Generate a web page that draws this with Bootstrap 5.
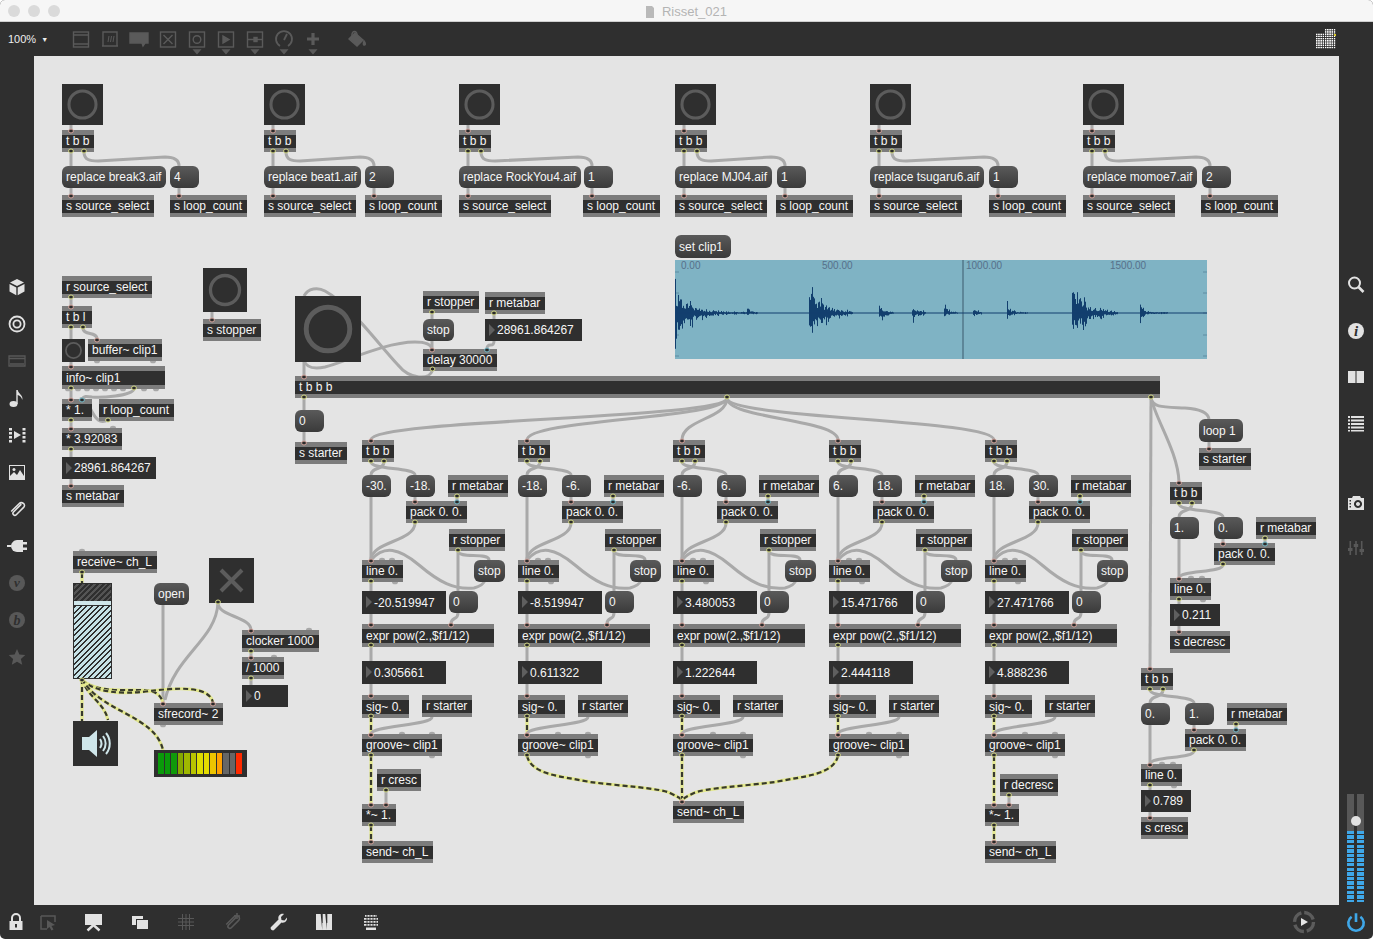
<!doctype html>
<html lang="en">
<head>
<meta charset="utf-8">
<title>Risset_021</title>
<link href="https://cdn.jsdelivr.net/npm/bootstrap@5.3.0/dist/css/bootstrap.min.css" rel="stylesheet">
<style>
html,body{height:100%;margin:0;background:#fff;overflow:hidden}
.mx-win{height:939px;background:#2f2f2f;border-radius:5px;overflow:hidden;font-family:"Liberation Sans",Arial,sans-serif}
.mx-title{height:22px;background:#f6f6f6;border-bottom:1px solid #cfcfcf;position:relative;color:#b4b4b4;font-size:13px;padding-top:2px}
.mx-titleic{margin-right:7px;margin-left:-1px}
.mx-lights{left:8px;top:5px;gap:8px}
.mx-light{width:12px;height:12px;border-radius:50%;background:#dadada}
.mx-tool{height:34px;color:#5a5a5a}
.mx-zoomsel{width:69px;padding-left:8px;color:#eee;font-size:11px}
.mx-zoomsel span{font-size:7px;margin-left:5px;vertical-align:1px}
.mx-tool svg.t{width:24px;height:34px;margin-right:5px;flex:none}
.mx-gridic{margin-right:37px}
.mx-bucket{margin-left:13px}
.mx-side{width:34px;flex:none;color:#e2e2e2}
.mx-sl{padding-top:221px;gap:17px}
.mx-sr{padding-top:206px}
.mx-srow{height:46px}
.mx-srow-gap{margin-top:33px}
.mx-side svg,.mx-bot svg{width:20px;height:20px;flex:none;overflow:visible}
.mx-dim{color:#585858}
.mx-canvas{background:#e4e4e4;height:849px}
.mx-layer{position:absolute;left:0;top:0;width:1305px;height:849px;pointer-events:none}
.mx-cords{z-index:1}.mx-dots{z-index:3}
.mx-node{position:absolute;z-index:2;display:flex;align-items:center;height:22px;padding:0 4px;color:#f6f6f6;font-size:12px;line-height:1;white-space:nowrap;overflow:hidden}
.mx-obj{background:linear-gradient(#7c7c7c 0 5px,#2f2f2f 5px calc(100% - 4px),#7c7c7c calc(100% - 4px))}
.mx-msg{background:linear-gradient(#5a5a5a,#3a3a3a);border-radius:6px}
.mx-num{background:#2f2f2f;padding-left:12px}
.mx-num::before{content:"";position:absolute;left:4px;top:5px;border-left:6px solid #5f5f5f;border-top:6px solid transparent;border-bottom:6px solid transparent}
.mx-sq{background:#2f2f2f;padding:0}
.mx-sq svg{display:block;width:100%;height:100%}
.mx-gain{background:repeating-linear-gradient(135deg,#2f2f2f 0 1.4px,#c6e2e7 1.4px 4px);border:1px solid #2f2f2f;padding:0;display:block}
.mx-gaintop{height:17px;background:repeating-linear-gradient(135deg,#2f2f2f 0 2px,#545454 2px 4px)}
.mx-gainbar{height:5px;background:#cfe6ea;border-bottom:1px solid #2f2f2f}
.mx-meter{background:#2f2f2f;padding:3px 4px 3px 4px;gap:0;align-items:stretch}
.mx-seg{flex:1;margin-right:1px;min-width:0}
.mx-wave{background:#7fb3c4;padding:0}
.mx-wave svg{display:block}
.mx-wave text{font:10px "Liberation Sans",Arial,sans-serif;fill:#56708a}
.mx-fader{gap:3px;margin-top:auto;margin-bottom:3px;height:108px;position:relative;width:18px}
.mx-fadertrack{width:7px;height:100%;background:linear-gradient(#585858 0 37px,transparent 37px),repeating-linear-gradient(#3fa7e8 0 3.4px,#2f2f2f 3.4px 4.6px)}
.mx-knob{position:absolute;left:4px;top:22px;width:10px;height:10px;border-radius:50%;background:#e2e2e2}
.mx-bot{height:34px;color:#e2e2e2;position:relative}
.mx-bot svg{position:absolute;top:7px}
.mx-bot svg.mx-play{width:24px;height:24px;top:5px}
.mx-bot svg.mx-power{color:#3fa7e8;width:22px;height:22px;top:6px}
</style>
</head>
<body>
<div class="mx-win d-flex flex-column">
  <div class="mx-title d-flex align-items-center justify-content-center flex-none">
    <div class="mx-lights position-absolute d-flex"><i class="mx-light"></i><i class="mx-light"></i><i class="mx-light"></i></div>
    <svg width="10" height="12" viewBox="0 0 10 12" class="mx-titleic"><path d="M1 0h6l2 2v10H1z" fill="#b9b9b9"/></svg>
    <span>Risset_021</span>
  </div>
  <div class="mx-tool d-flex align-items-center" id="mxTool">
    <div class="mx-zoomsel">100%<span>&#9660;</span></div>
  </div>
  <div class="d-flex flex-grow-1">
    <aside class="mx-side mx-sl d-flex flex-column align-items-center" id="mxLeft"></aside>
    <main class="mx-canvas position-relative flex-grow-1" id="mxCanvas"></main>
    <aside class="mx-side mx-sr d-flex flex-column align-items-center" id="mxRight"></aside>
  </div>
  <footer class="mx-bot" id="mxBot"></footer>
</div>
<script src="https://cdn.jsdelivr.net/npm/bootstrap@5.3.0/dist/js/bootstrap.bundle.min.js"></script>
<script>
(function(){
const cv=document.getElementById('mxCanvas');
let cords='',dots='';
function node(x,y,w,txt,cls,h,inner){
  const d=document.createElement('div');
  d.className='mx-node '+cls;
  d.style.left=(x-34)+'px';d.style.top=(y-56)+'px';d.style.width=w+'px';
  if(h)d.style.height=h+'px';
  if(inner!==undefined)d.innerHTML=inner;else d.textContent=txt;
  cv.appendChild(d);
}
const O=(x,y,w,t,h)=>node(x,y,w,t,'mx-obj',h);
const M=(x,y,w,t,h)=>node(x,y,w,t,'mx-msg',h);
const N=(x,y,w,t,h)=>node(x,y,w,t,'mx-num',h);
function B(x,y,s){node(x,y,s,'','mx-sq',s,`<svg viewBox="0 0 100 100"><circle cx="50" cy="50" r="33" fill="none" stroke="#5c5c5c" stroke-width="7.5"/></svg>`);}
function dot(x,y,k){const st={o:'#d6db86',i:'#d6a59d',c:'#74bccb'}[k];
  dots+=`<ellipse cx="${x}" cy="${y}" rx="2.4" ry="2" fill="#2b2b2b" stroke="${st}" stroke-width="1"/>`;}
function lump(x,y,up){dots+=`<path d="M${x-3} ${y}A3 2.300 0 0 ${up?0:1} ${x+3} ${y}Z" fill="#a8a8a8"/>`;}
function P(d,f=''){
  if(f.includes('s')) cords+=`<path d="${d}" fill="none" stroke="#e3e88e" stroke-width="3.2"/><path d="${d}" fill="none" stroke="#37392c" stroke-width="2.2" stroke-dasharray="5 3"/>`;
  else cords+=`<path d="${d}" fill="none" stroke="#a9a9a9" stroke-width="3"/>`;
}
function C(x1,y1,x2,y2,f=''){
  let d;
  if(x1===x2)d=`M${x1} ${y1}L${x2} ${y2}`;
  else{const k=Math.max(8,Math.abs(y2-y1)*.5);d=`M${x1} ${y1}C${x1} ${y1+k} ${x2} ${y2-k} ${x2} ${y2}`;}
  P(d,f);
  if(!f.includes('n'))dot(x1,y1-1,'o');
  if(!f.includes('e'))dot(x2,y2+1,f.includes('c')?'c':'i');
}
function arc(x1,y1,x2,y2){P(`M${x1} ${y1}C${x1} ${y1+8} ${x1+6} ${y1+9} ${x1+14} ${y1+9}L${x2-14} ${y1+5}C${x2-4} ${y1+5} ${x2} ${y1+8} ${x2} ${y2}`);dot(x1,y1-1,'o');}

/* ---------- top row of players ---------- */
[[62,'replace break3.aif',104,170,'4',170],
 [264,'replace beat1.aif',97,365,'2',365],
 [459,'replace RockYou4.aif',122,584,'1',583],
 [675,'replace MJ04.aif',97,777,'1',776],
 [870,'replace tsugaru6.aif',114,989,'1',989],
 [1083,'replace momoe7.aif',114,1202,'2',1201]].forEach(([x,t,w,mx,v,sx])=>{
  B(x,84,41);O(x,130,32,'t b b');M(x,166,w,t);M(mx,166,29,v);
  O(x,195,92,'s source_select');O(sx,195,77,'s loop_count');
  C(x+9,125,x+9,130,'n');C(x+9,152,x+9,166,'e');arc(x+22,152,sx+9,166);
  C(x+9,188,x+9,195,'n');C(sx+9,188,sx+9,195,'n');
});

/* ---------- left column ---------- */
O(62,276,90,'r source_select');O(62,306,30,'t b l');B(62,339,23);O(88,339,74,'buffer~ clip1');
O(62,366,103,'info~ clip1',23);O(62,399,30,'* 1.');O(99,399,75,'r loop_count');O(62,428,60,'* 3.92083');
N(62,457,94,'28961.864267');O(62,485,62,'s metabar');
B(203,268,44);O(203,319,58,'s stopper');
C(71,298,71,306);C(71,328,71,339,'e');C(71,362,71,366,'n');C(83,328,97,339);
C(71,389,71,399);
P('M134 389C132 396 100 398 92 397C86 396 84 396 82 399');dot(134,388,'o');dot(82,400,'c');
P('M108 420C100 424 96 420 90 408C88 402 84 398 80 399');dot(108,420,'o');
C(71,421,71,428);C(71,450,71,457,'e');C(71,479,71,485,'n');
C(212,312,212,319,'n');
[68,78,87,96,105,114,123,144,156].forEach(x=>lump(x,389,1));
[97,153].forEach(x=>lump(x,361,1));lump(113,428,0);

/* ---------- transport ---------- */
B(295,296,66);O(295,376,865,'t b b b');M(295,410,29,'0');O(295,442,52,'s starter');
O(423,291,56,'r stopper');O(485,292,60,'r metabar');M(423,319,31,'stop');N(485,319,97,'28961.864267');O(423,349,74,'delay 30000');
P('M432.5 370C430 380 410 380 398 365C375 340 350 305 325 291C318 287 308 288 304 296');dot(432.5,369,'o');
P('M304 360C306 368 315 369 325 367C345 362 385 342 415 342C425 342 431 344 432 349');
C(304,362,304,376,'n');C(304,398,304,410,'e');C(304,432,304,442,'n');
C(432,313,432,319,'e');C(432,341,432,349,'n');C(494,314,494,319,'e');C(494,341,487,349,'nc');

/* ---------- five voices ---------- */
const vs=[[362,'-30.','-18.','-20.519947','0.305661'],[518,'-18.','-6.','-8.519947','0.611322'],
 [673,'-6.','6.','3.480053','1.222644'],[829,'6.','18.','15.471766','2.444118'],[985,'18.','30.','27.471766','4.888236']];
vs.forEach(([X,a,b,v1,v2],i)=>{
  const c=X+9;
  O(X,440,32,'t b b');M(X,475,29,a);M(X+44,475,29,b);O(X+86,475,60,'r metabar');O(X+44,501,61,'pack 0. 0.');
  O(X+87,529,56,'r stopper');O(X,560,41,'line 0.');M(X+112,560,31,'stop');N(X,591,84,v1,23);M(X+87,591,29,'0');
  O(X,624,132,'expr pow(2.,$f1/12)',23);N(X,661,84,v2,23);O(X,695,47,'sig~ 0.',23);O(X+60,695,50,'r starter');O(X,734,80,'groove~ clip1');
  C(727,398,c,440,i?'n':'');
  C(c,462,c+44,475,'e');C(c+13,462,c,475,'e');
  C(c+44,497,c+44,501,'n');C(c+86,497,c+86,501,'c');
  P(`M${c} 497L${c} 560`);
  C(c+44,523,c,560);
  C(c+87,551,c+87,591,'e');C(c+87,551,c+118,560,'ne');
  P(`M${c} 560C${c+13} 545 ${c+28} 548 ${c+48} 565C${c+68} 582 ${c+83} 590 ${c+103} 588C${c+110} 586 ${c+113} 584 ${c+114} 580`);
  C(c+87,613,c+80,624,'n');
  C(c,582,c,591,'e');C(c,613,c,624,'n');C(c,646,c,661,'e');C(c,684,c,695,'n');
  C(c,717,c,734,'s');C(X+70,717,c,734,'n');
  [X+20,X+30].forEach(x=>lump(x,560,0));lump(X+33,582,1);
  [X+40,X+70].forEach(x=>lump(x,734,0));lump(X+70,756,1);
});
O(377,769,44,'r cresc');O(362,804,34,'*~ 1.');O(362,841,71,'send~ ch_L');
C(371,756,371,804,'s');C(386,791,386,804);C(371,826,371,841,'s');
O(673,801,71,'send~ ch_L');
P('M527 756C532 775 560 776 590 782C620 786 660 788 670 793C676 796 681 798 682 801','s');dot(527,755,'o');
C(682,756,682,801,'s');
P('M838 756C833 775 805 776 775 782C745 786 705 788 694 793C688 796 683 798 682 801','s');dot(838,755,'o');
O(1000,774,58,'r decresc');O(985,804,34,'*~ 1.');O(985,841,71,'send~ ch_L');
C(994,756,994,804,'s');C(1009,796,1009,804);C(994,826,994,841,'s');

/* ---------- right voices ---------- */
M(1199,419,44,'loop 1',23);O(1199,448,52,'s starter');
P('M1151 398C1152 408 1165 407 1185 408C1200 409 1208 412 1209 419');dot(1151,397,'o');
C(1209,441,1209,448,'n');
P('M1151 398C1156 420 1178 452 1179 482');dot(1179,483,'i');
C(1151,398,1150,668,'n');
function ramp(X,y,a,b,val,s,sw){
  const c=X+9;
  O(X,y,32,'t b b');M(X,y+35,29,a);M(X+44,y+35,29,b);O(X+86,y+35,60,'r metabar');O(X+44,y+61,61,'pack 0. 0.');
  O(X,y+96,41,'line 0.');N(X,y+122,50,val);O(X,y+149,sw,s);
  C(c,y+22,c+44,y+35,'e');C(c+13,y+22,c,y+35,'e');
  C(c+44,y+57,c+44,y+61,'n');C(c+86,y+57,c+86,y+61,'c');
  P(`M${c} ${y+57}L${c} ${y+96}`);C(c+44,y+83,c,y+96);
  C(c,y+118,c,y+122,'e');C(c,y+144,c,y+149,'n');
  [X+11,X+22].forEach(x=>lump(x+10,y+96,0));lump(X+33,y+118,1);
}
ramp(1170,482,'1.','0.','0.211','s decresc',60);
ramp(1141,668,'0.','1.','0.789','s cresc',47);

/* ---------- audio section ---------- */
O(73,551,84,'receive~ ch_L');lump(82,551,0);
node(73,583,39,'','mx-gain',96,'<div class="mx-gaintop"></div><div class="mx-gainbar"></div>');
node(73,721,45,'','mx-sq',45,'<svg viewBox="0 0 45 45"><path d="M9 16h7l8-7v27l-8-7H9z" fill="#cfe6ea"/><g fill="none" stroke="#cfe6ea" stroke-width="2"><path d="M27 18c2 3 2 6 0 9"/><path d="M30 15c3.500 4.500 3.500 10.500 0 15"/><path d="M33 12c5 6 5 15 0 21"/></g></svg>');
M(154,583,35,'open');
node(209,558,45,'','mx-sq',45,'<svg viewBox="0 0 45 45"><path d="M12 12L33 33M33 12L12 33" stroke="#5c5c5c" stroke-width="4"/></svg>');
O(242,630,77,'clocker 1000');O(242,657,42,'/ 1000');N(242,685,46,'0');O(154,703,69,'sfrecord~ 2');
lump(309,630,0);lump(274,657,0);lump(163,725,1);
const segs=['#0a9a0a','#0a9a0a','#0f9a0a','#85a900','#9fb800','#b8c400','#dede00','#e4dc00','#ecc400','#ffa000','#666','#666','#ff2a00'];
node(154,750,93,'','mx-meter d-flex',27,segs.map(c=>`<div class="mx-seg" style="background:${c}"></div>`).join(''));
C(82,573,82,583,'se');
C(163,605,163,703,'ne');
P('M218 603C216 640 175 655 165 700');
C(218,603,251,630,'n');dot(218,602,'o');
C(251,652,251,657);C(251,679,251,685,'e');
P('M82 679L82 721','s');
P('M82 679C88 698 104 702 108 720','s');
P('M82 680C98 695 135 688 150 691C158 692 162 698 163 703','s');
P('M82 680C95 692 120 695 150 691C175 688 210 685 213 703','s');
P('M82 679C100 712 155 715 163 750','s');
dot(82,680,'o');dot(163,704,'i');dot(213,704,'i');

/* ---------- waveform ---------- */
M(675,235,56,'set clip1',23);
let seed=7;const rnd=()=>(seed=(seed*1664525+1013904223)%4294967296)/4294967296;
const bursts=[[675,22,30,14,757],[747,8,2,2.500,758],[809,24,25,14,853],[879,7,8,6,894],[912,7,7,6,926],[944,11,3,3,958],[973,3,3,5,982],[1007,12,7,3,1028],[1072,22,26,14,1118],[1140,13,10,3,1168]];
let wp='';
for(let x=675;x<1207;x+=1){let u=0,d=0;
  bursts.forEach(([s,a,b,t,e])=>{if(x>=s&&x<e){u=Math.max(u,a*Math.exp(-(x-s)/t)+.7);d=Math.max(d,b*Math.exp(-(x-s)/t)+.7);}});
  if(u>0){const sp=rnd()<.25?1.6:1,r=(.3+.7*rnd())*sp,q=(.3+.7*rnd())*sp;wp+=`M${x-675+.5} ${(53-u*r).toFixed(1)}V${(53+d*q).toFixed(1)}`;}
}
const tk=[12,33,53,75,96].map(y=>`<path d="M0 ${y}h4M528 ${y}h4"/>`).join('');
node(675,260,532,'','mx-wave',99,`<svg width="532" height="99" viewBox="0 0 532 99">
<g stroke="#5e8ca2">${tk}</g><path d="M288 0V99" stroke="#5d8698" stroke-width="2"/>
<path d="${wp}" stroke="#123f6e" stroke-width="1" fill="none"/><path d="M0 53H532" stroke="#123f6e"/>
<text x="6" y="9">0.00</text><text x="147" y="9">500.00</text><text x="291" y="9">1000.00</text><text x="435" y="9">1500.00</text></svg>`);

const layer=(cls,inner)=>`<svg class="mx-layer ${cls}" viewBox="34 56 1305 849">${inner}</svg>`;
cv.insertAdjacentHTML('beforeend',layer('mx-cords',cords)+layer('mx-dots',dots));

/* ---------- chrome icons ---------- */
const sv=(body,cls='')=>`<svg viewBox="0 0 20 20" class="${cls}" fill="currentColor">${body}</svg>`;
const tri='<path d="M9 28h6l-3 3.500z" fill="#5a5a5a"/>';
const tl=(b,c='t')=>`<svg class="${c}" viewBox="0 0 24 34" fill="none" stroke="#5a5a5a" stroke-width="1.4">${b}</svg>`;
const tools=[
 tl('<rect x="4.500" y="10" width="15" height="15"/><path d="M4.500 13h15M4.500 22h15"/>'),
 tl('<path d="M5 24V10h14v14M4 24h16"/><path d="M10 20l1-6M12.500 20l1-6M15 20l1-6" stroke-width="1"/>'),
 tl('<path d="M3 11h18v10h-3l-2 3-1-3H3z" fill="#5a5a5a"/>'),
 tl('<rect x="4.500" y="10" width="15" height="15"/><path d="M7.500 13l9 9M16.500 13l-9 9"/>'),
 tl('<rect x="4.500" y="10" width="15" height="15"/><circle cx="12" cy="17.500" r="3.800"/>'+tri),
 tl('<rect x="4.500" y="10" width="15" height="15"/><path d="M9 14l6 3.500-6 3.500z" fill="#5a5a5a"/>'+tri),
 tl('<rect x="4.500" y="10" width="15" height="15"/><path d="M4.500 17.500h15"/><rect x="11" y="15.500" width="3" height="4" fill="#5a5a5a"/>'+tri),
 tl('<path d="M8 24a8 8 0 1 1 8 0" stroke-width="1.800"/><path d="M12 18l3-6" stroke-width="1.800"/>'+tri),
 tl('<path d="M12 11v12M6 17h12" stroke-width="3.200"/>'+tri),
 tl('<path d="M12 11l8 7-6 6-8-7z" fill="#5a5a5a"/><path d="M9 14c-1-6 6-6 5 0"/><path d="M21 19c1.500 2 2 3 .8 4-1.400.5-2-1-.8-4z" fill="#5a5a5a"/>','t mx-bucket')
];
const grid=`<svg class="mx-gridic ms-auto" width="20" height="20" viewBox="0 0 20 20"><defs><pattern id="mxg" width="2.222" height="2.222" patternUnits="userSpaceOnUse"><rect width="1.500" height="1.500" fill="#fff"/></pattern></defs><path d="M0 4.444H8.888V0H20V20H0z" fill="url(#mxg)"/><rect x="18" y="5" width="2" height="2" fill="#d8c82a"/></svg>`;
document.getElementById('mxTool').insertAdjacentHTML('beforeend',tools.join('')+grid);

const clip='<path d="M14.500 4.500L6 13c-2 2 1 5 3 3l8-8c3-3-2-7-5-4L3.500 12.500" fill="none" stroke="currentColor" stroke-width="1.700" transform="translate(1 1) scale(.92)"/>';
const left=[
 sv('<path d="M10 2l7 3.500-7 3.500-7-3.500z"/><path d="M2.500 7l6.800 3.400v7.800L2.500 14.500z"/><path d="M17.500 7l-6.800 3.400v7.800l6.800-3.700z"/>'),
 sv('<g fill="none" stroke="currentColor" stroke-width="1.800"><circle cx="10" cy="10" r="7.500"/><circle cx="10" cy="10" r="3.600"/></g>'),
 sv('<path d="M2 5h16v10H2zM2 7.500h16M3 13h14" fill="none" stroke="currentColor" stroke-width="1.300"/>','mx-dim'),
 sv('<ellipse cx="6.500" cy="16" rx="4" ry="3"/><path d="M9.300 2h1.400c.5 4 6 5 4.500 10-.3-3-3-4.500-4.500-5v9H9.300z"/>'),
 sv('<path d="M7 6l7 4-7 4z"/><path d="M2 3h3v2.500H2zM2 7h3v2.500H2zM2 11h3v2.500H2zM2 15h3v2.500H2zM15.500 3h3v2.500h-3zM15.500 7h3v2.500h-3zM15.500 11h3v2.500h-3zM15.500 15h3v2.500h-3z"/>'),
 sv('<path fill-rule="evenodd" d="M2 3h16v15H2zM3 4v10l4-4 3 3 3-5 4 6V4z"/><circle cx="7" cy="7.500" r="1.500"/>'),
 sv(clip),
 sv('<path d="M8 4h6v12H8a6 6 0 0 1-6-6c0-3 3-6 6-6z" transform="translate(2 0)"/><path d="M16 6h4v2.500h-4zM16 11.500h4V14h-4zM0 9h4v2H0z"/>'),
 `<svg viewBox="0 0 20 20" class="mx-dim"><circle cx="10" cy="10" r="8" fill="currentColor"/><text x="10" y="14" text-anchor="middle" font-family="Liberation Serif,serif" font-style="italic" font-weight="700" font-size="13" fill="#2f2f2f">v</text></svg>`,
 `<svg viewBox="0 0 20 20" class="mx-dim"><circle cx="10" cy="10" r="8" fill="currentColor"/><text x="10" y="14.500" text-anchor="middle" font-family="Liberation Serif,serif" font-style="italic" font-weight="700" font-size="14" fill="#2f2f2f">b</text></svg>`,
 sv('<path d="M10 2l2.400 5.400 5.900.6-4.400 3.900 1.300 5.800-5.200-3-5.200 3 1.300-5.800L1.700 8l5.900-.6z"/>','mx-dim')
];
document.getElementById('mxLeft').innerHTML=left.join('');

const rg=(b,c='')=>`<div class="mx-srow d-flex align-items-center ${c}">${b}</div>`;
const right=[
 rg(sv('<circle cx="8.500" cy="8" r="5.500" fill="none" stroke="currentColor" stroke-width="2"/><path d="M12.500 12l5 5" stroke="currentColor" stroke-width="2.600"/>')),
 rg(`<svg viewBox="0 0 20 20"><circle cx="10" cy="10" r="8" fill="currentColor"/><text x="10" y="15" text-anchor="middle" font-family="Liberation Serif,serif" font-style="italic" font-weight="700" font-size="15" fill="#2f2f2f">i</text></svg>`),
 rg(sv('<path d="M2 4h7.500v12H2zM10.500 4H18v12h-7.500z"/>')),
 rg(sv('<path d="M2 3h2v2H2zM5 3h13v2H5zM2 6.500h2v2H2zM5 6.500h13v2H5zM2 10h2v2H2zM5 10h13v2H5zM2 13.500h2v2H2zM5 13.500h13v2H5zM2 17h2v1.500H2zM5 17h13v1.500H5z"/>')),
 rg(sv('<path fill-rule="evenodd" d="M2 6h4l1-2h7l1 2h3v12H2zM12 8a4 4 0 1 0 .01 0zM12 10a2 2 0 1 1-.01 0zM3.500 8v1.500H5V8zM3.500 11v1.500H5V11zM3.500 14v1.500H5V14z"/>'),'mx-srow-gap'),
 rg(sv('<path d="M3.500 3h1.600v14H3.500zM9.200 3h1.600v14H9.200zM14.900 3h1.600v14h-1.600zM2 10h4.500v3H2zM7.700 6h4.500v3H7.700zM13.500 11h4.500v3h-4.500z"/>','mx-dim'))
];
document.getElementById('mxRight').innerHTML=right.join('')+'<div class="mx-fader d-flex"><div class="mx-fadertrack"></div><div class="mx-fadertrack"></div><div class="mx-knob"></div></div>';

const at=(x,b)=>b.replace('<svg ',`<svg style="left:${x-10}px" `);
const bot=[
 at(16,sv('<path fill-rule="evenodd" d="M3.500 9h13v9h-13zM9 12v3.500h2V12z"/><path d="M6 9.500V6a4 4 0 0 1 8 0v3.500" fill="none" stroke="currentColor" stroke-width="2"/>')),
 at(48,sv('<path d="M3 4h14v6M9 17H3V4" fill="none" stroke="currentColor" stroke-width="1.500"/><path d="M9 8l8 5-3.500 1 2 3.500-2 1-2-3.500-2.500 2z"/>','mx-dim')),
 at(94,sv('<path d="M1 2h17v11H1z"/><path d="M9.500 13l-6 5.500M9.500 13l6 5.500" stroke="currentColor" stroke-width="2.400"/>')),
 at(140,sv('<path d="M2 4h11v3H6v6H2z"/><path d="M7 8h11v9H7z"/>')),
 at(186,sv('<path d="M6.500 2v16M10 2v16M13.500 2v16M2 6.500h16M2 10h16M2 13.500h16" stroke="currentColor" stroke-width="1" fill="none"/>','mx-dim')),
 at(232,sv(clip+'<path d="M15 1v6M12 4h6" stroke="currentColor" stroke-width="1.600"/>','mx-dim')),
 at(278,sv('<path d="M19 5.500c.5 3-2 6-5.500 5L6 18c-1.500 1.500-4.500-1.500-3-3l7.500-7.500c-1-3.500 2-6.500 5.500-5.500l-3 3 .5 3 3 .5z"/>')),
 at(324,sv('<path d="M2 2h16v16H2z"/><path d="M6.700 2h2v9h-.5v7M11.300 2h2v9h-.5v7" fill="#2f2f2f"/>')),
 at(371,sv('<path d="M4 3h12v1.800H4zM3 6h14v1.800H3zM3 9h14v1.800H3zM3 12h14v1.800H3zM5 15.500h10V18H5z"/><path d="M6 3v11M9 3v11M12 3v11M15 3v11" stroke="#2f2f2f" stroke-width=".9"/>')),
 at(1302,`<svg viewBox="0 0 24 24" class="mx-play"><circle cx="12" cy="12" r="9.500" fill="none" stroke="#5c5c5c" stroke-width="3.400" stroke-dasharray="12 2.900"/><path d="M9 8l7 4-7 4z" fill="#e6e6e6"/></svg>`),
 at(1355,`<svg viewBox="0 0 20 20" class="mx-power"><path d="M6 5.200a7 7 0 1 0 8 0" fill="none" stroke="currentColor" stroke-width="2.400"/><path d="M10 2v8" stroke="currentColor" stroke-width="2.400"/></svg>`)
];
document.getElementById('mxBot').innerHTML=bot.join('');
})();
</script>
</body>
</html>
